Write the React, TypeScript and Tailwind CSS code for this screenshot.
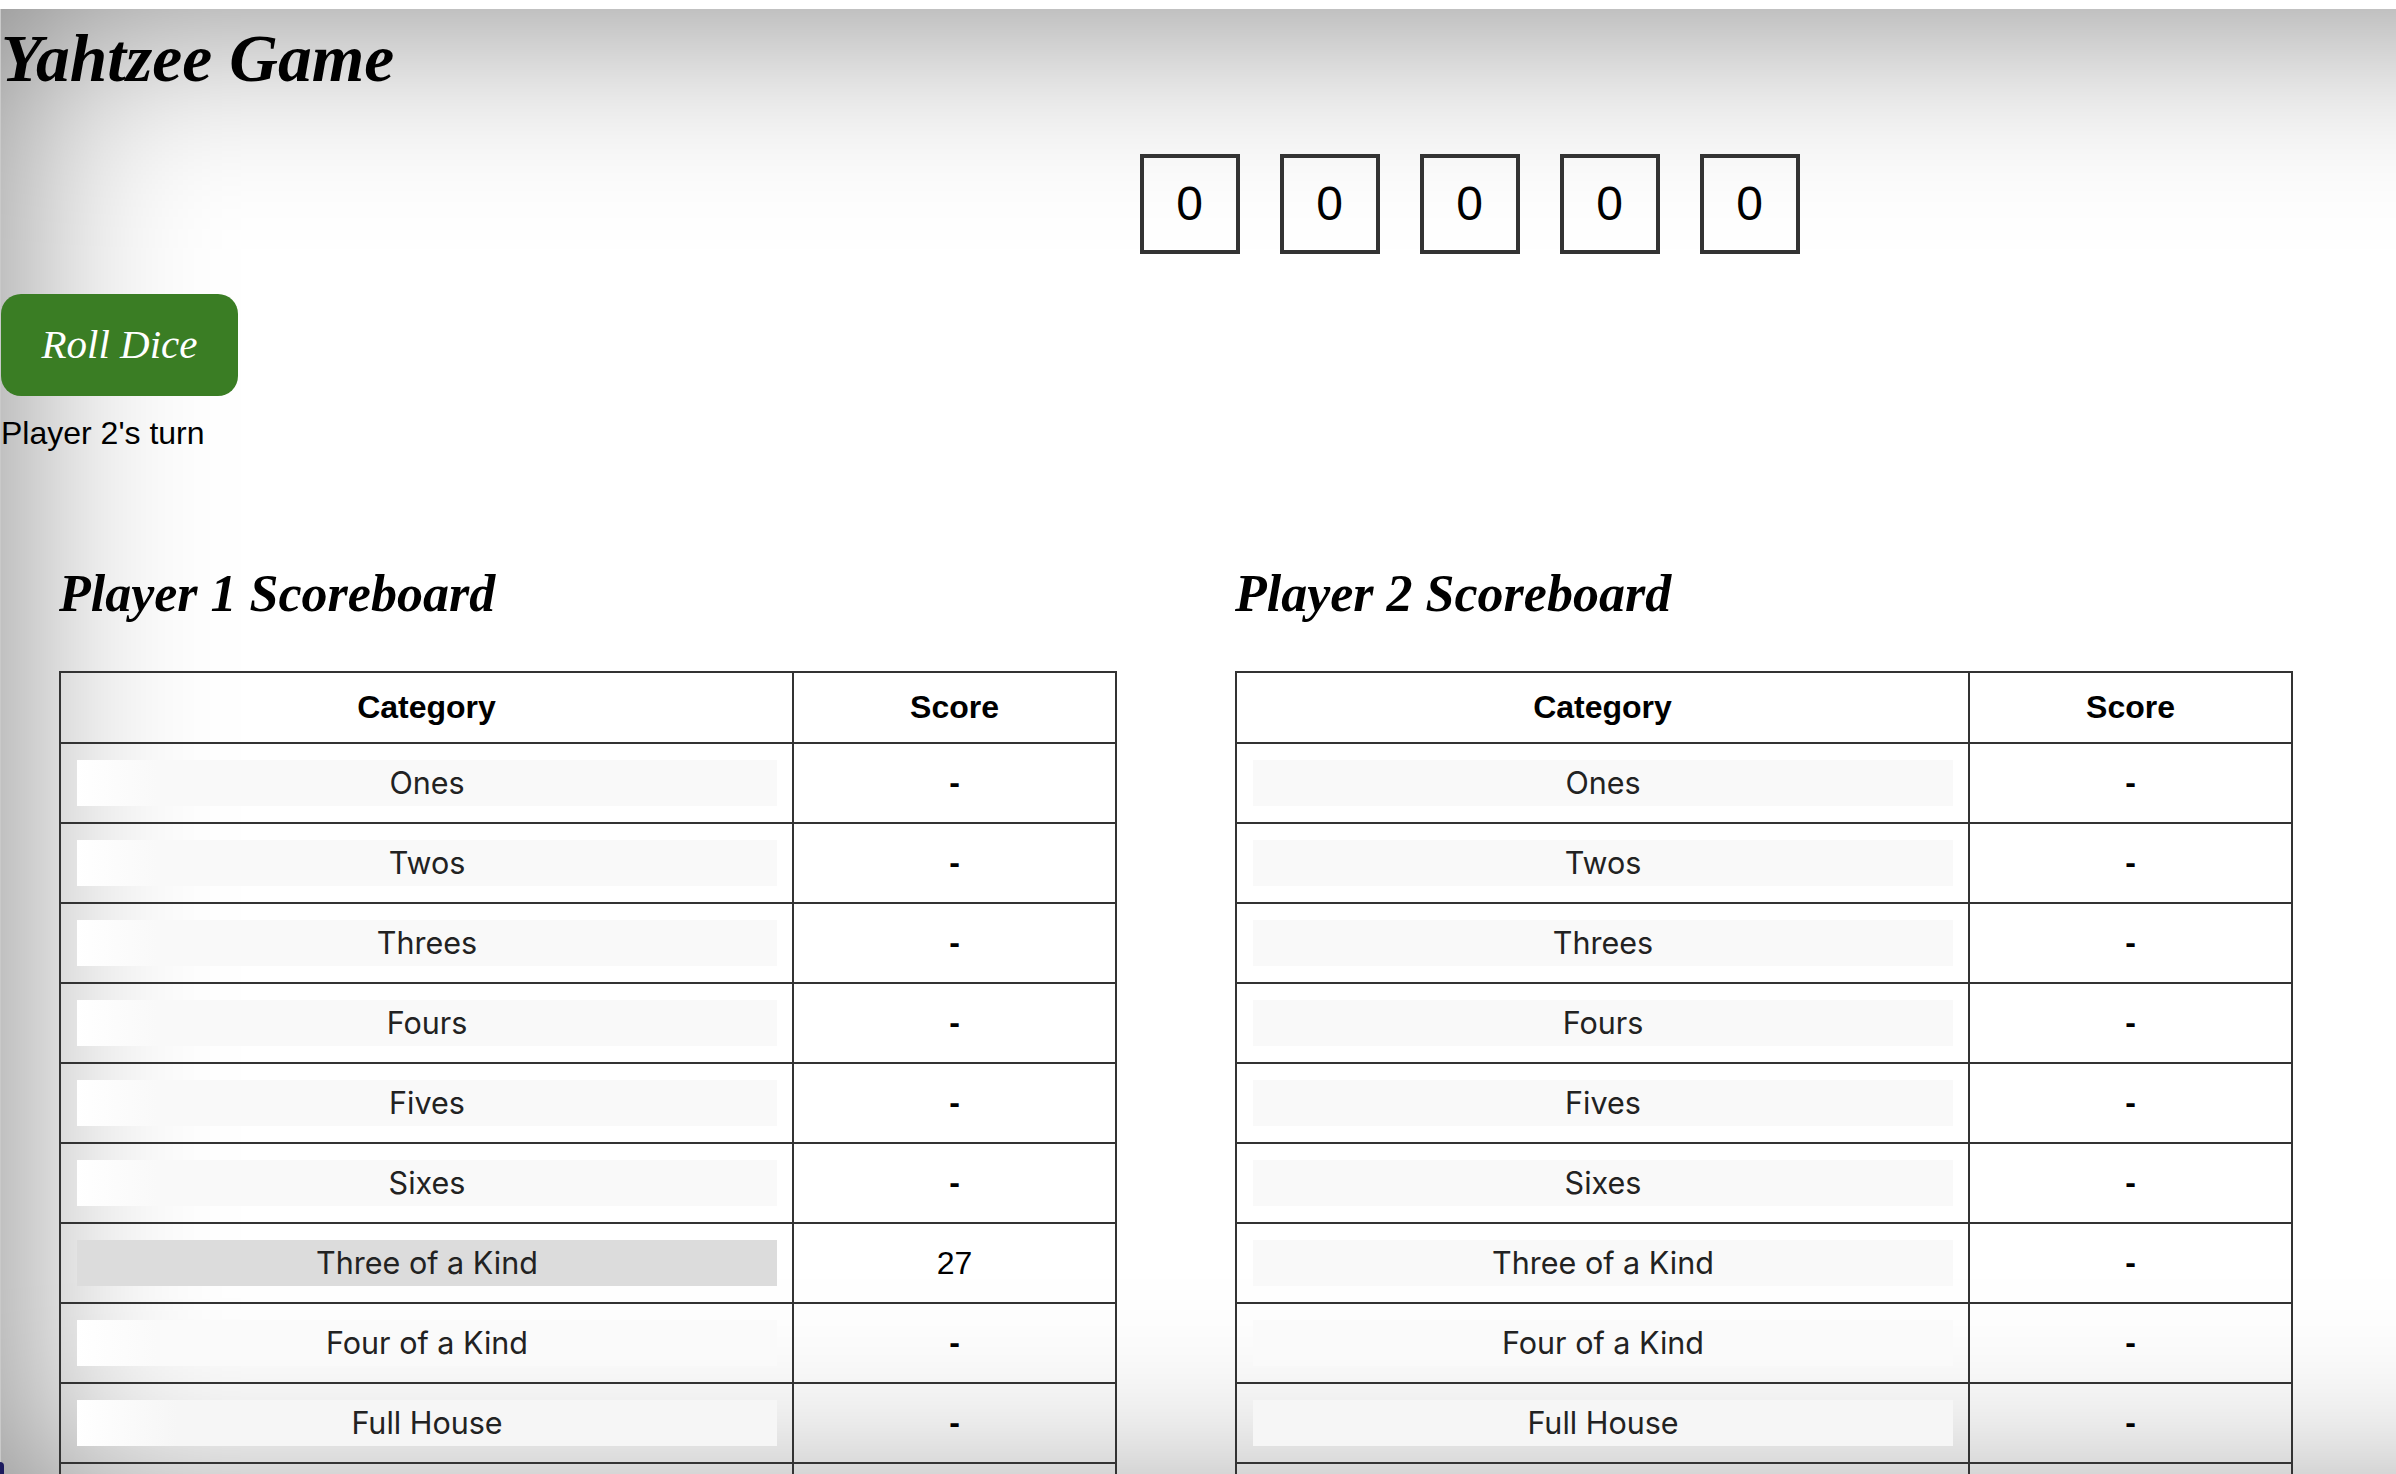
const categories = [
  "Ones",
  "Twos",
  "Threes",
  "Fours",
  "Fives",
  "Sixes",
  "Three of a Kind",
  "Four of a Kind",
  "Full House",
];

// buttons catch a bit of the page shadow near the left and bottom edges
function buttonFill(player: number, name: string, scored: boolean) {
  if (scored) return "bg-[#dcdcdc]";
  if (player === 1) {
    if (name === "Four of a Kind") return "bg-[linear-gradient(to_right,#ffffff,#fafafa_80px)]";
    if (name === "Full House") return "bg-[linear-gradient(to_right,#ffffff,#f6f6f6_100px)]";
    return "bg-[linear-gradient(to_right,#ffffff,#f9f9f9_80px)]";
  }
  if (name === "Four of a Kind") return "bg-[#fafafa]";
  if (name === "Full House") return "bg-[#f6f6f6]";
  return "bg-[#f9f9f9]";
}

function Scoreboard({ player, filled }: { player: number; filled?: Record<string, number> }) {
  return (
    <div className="w-[1058px] shrink-0">
      <h2 className="mb-[42px] h-[70px] font-['Liberation_Serif',serif] text-[52px] leading-[70px] font-bold italic">
        Player {player} Scoreboard
      </h2>
      <table className="w-full table-fixed border-collapse border-2 border-[#333]">
        <thead>
          <tr className="h-[71px]">
            <th className="w-[733px] border-2 border-[#333] pb-[2px] text-[32px] font-bold">Category</th>
            <th className="border-2 border-[#333] pb-[2px] text-[32px] font-bold">Score</th>
          </tr>
        </thead>
        <tbody>
          {categories.map((name) => {
            const score = filled?.[name];
            return (
              <tr key={name} className="h-[80px]">
                <td className="border-2 border-[#333] px-[16px] py-[16px]">
                  <button
                    className={`block h-[46px] w-[700px] text-center font-['Inter',sans-serif] text-[30.5px] leading-[46px] text-[#222] ${buttonFill(
                      player,
                      name,
                      score !== undefined
                    )}`}
                  >
                    {name}
                  </button>
                </td>
                <td className={`border-2 border-[#333] text-center text-[32px] ${score === undefined ? "pb-[2px] font-bold" : ""}`}>
                  {score ?? "-"}
                </td>
              </tr>
            );
          })}
          {/* next row is cut by the bottom of the window */}
          <tr className="h-[80px]">
            <td className="border-2 border-[#333]" />
            <td className="border-2 border-[#333]" />
          </tr>
        </tbody>
      </table>
    </div>
  );
}

export default function App() {
  return (
    <div className="relative h-screen w-screen overflow-hidden bg-white font-['Liberation_Sans',sans-serif] text-black">
      <div className="mt-[9px] h-[1510px] w-[2938px] overflow-hidden border-l border-[#c9c9c9] shadow-[inset_0_0_200px_rgba(0,0,0,0.5)]">
        <h1 className="h-[100px] font-['Liberation_Serif',serif] text-[67.5px] leading-[100px] font-bold italic">
          Yahtzee Game
        </h1>
        <div className="mt-[45px] flex justify-center gap-[40px]">
          {[0, 1, 2, 3, 4].map((i) => (
            <div key={i} className="flex h-[100px] w-[100px] items-center justify-center border-4 border-[#333] text-[48px]">
              0
            </div>
          ))}
        </div>
        <button className="mt-[40px] block h-[102px] w-[237px] rounded-[20px] bg-[#3a7d24] font-['Liberation_Serif',serif] text-[41px] text-white italic">
          Roll Dice
        </button>
        <p className="mt-[19px] text-[32px] leading-[37px]">Player 2's turn</p>
        <div className="mt-[107px] flex gap-[118px] pl-[58px]">
          <Scoreboard player={1} filled={{ "Three of a Kind": 27 }} />
          <Scoreboard player={2} />
        </div>
      </div>
      {/* sliver of the desktop at the rounded window corner */}
      <div className="absolute bottom-0 left-0 h-[12px] w-[4px] rounded-tr-full bg-[#1c1a5e]" />
    </div>
  );
}
